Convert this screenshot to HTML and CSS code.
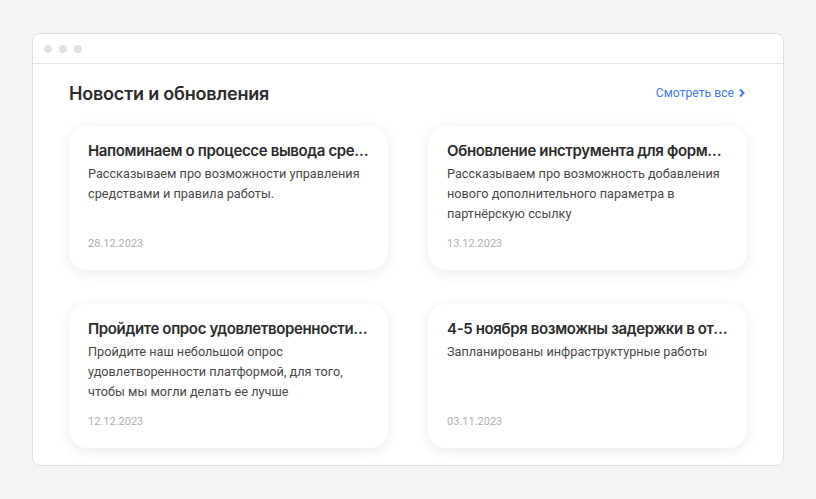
FILE: index.html
```html
<!DOCTYPE html>
<html lang="ru">

<head>
    <meta charset="UTF-8">
    <meta name="viewport" content="width=device-width, initial-scale=1.0">
    <title>Новости</title>
    <link rel="stylesheet" href="styles.css">
</head>

<body>
    <div class="window">
        <div class="window-bar">
            <span class="dot"></span>
            <span class="dot"></span>
            <span class="dot"></span>
        </div>
        <div class="window-body">
            <div class="news-head">
                <h2 class="news-title">Новости и обновления</h2>
                <a class="see-all" href="#">Смотреть все
                    <svg width="8" height="10" viewBox="0 0 8 10"><path d="M2 1.5 5.5 5 2 8.5" fill="none" stroke="currentColor" stroke-width="2" /></svg>
                </a>
            </div>
            <div class="news-grid">
                <div class="card">
                    <div class="card-title">Напоминаем о процессе вывода средств</div>
                    <div class="card-text">Рассказываем про возможности управления средствами и правила работы.</div>
                    <div class="card-date">28.12.2023</div>
                </div>
                <div class="card">
                    <div class="card-title">Обновление инструмента для формирования ссылок</div>
                    <div class="card-text">Рассказываем про возможность добавления нового дополнительного параметра в партнёрскую ссылку</div>
                    <div class="card-date">13.12.2023</div>
                </div>
                <div class="card">
                    <div class="card-title">Пройдите опрос удовлетворенности платформой</div>
                    <div class="card-text">Пройдите наш небольшой опрос удовлетворенности платформой, для того, чтобы мы могли делать ее лучше</div>
                    <div class="card-date">12.12.2023</div>
                </div>
                <div class="card">
                    <div class="card-title">4-5 ноября возможны задержки в отображении статистики</div>
                    <div class="card-text">Запланированы инфраструктурные работы</div>
                    <div class="card-date">03.11.2023</div>
                </div>
            </div>
        </div>
    </div>
</body>

</html>
```

FILE: styles.css
```css
* {
    box-sizing: border-box;
}

body {
    margin: 0;
    padding: 33px 32px;
    background-color: #f3f4f6;
    font-family: Roboto, "Noto Sans", sans-serif;
    color: #333;
}

.window {
    background-color: #fff;
    border: 1px solid #dfe0e4;
    border-radius: 8px;
    height: 433px;
    display: flex;
    flex-direction: column;
}

.window-bar {
    height: 30px;
    border-bottom: 1px solid #e3e4e8;
    display: flex;
    align-items: center;
    gap: 7px;
    padding-left: 11px;
}

.dot {
    width: 8px;
    height: 8px;
    border-radius: 50%;
    background-color: #e0e1e6;
}

.window-body {
    padding: 16px 36px 0 36px;
}

.news-head {
    display: flex;
    justify-content: space-between;
    align-items: center;
    height: 26px;
    margin-bottom: 20px;
}

.news-title {
    margin: 0;
    font-family: Inter, "Noto Sans", sans-serif;
    font-size: 18px;
    font-weight: 600;
    color: #2b2b2b;
    letter-spacing: -0.2px;
}

.see-all {
    color: #3f7be4;
    text-decoration: none;
    font-size: 12.2px;
    display: flex;
    align-items: center;
    gap: 4px;
    padding-right: 1px;
}

.news-grid {
    display: grid;
    grid-template-columns: minmax(0, 1fr) minmax(0, 1fr);
    column-gap: 40px;
    row-gap: 34px;
}

.card {
    height: 144px;
    border-radius: 18px;
    background-color: #fff;
    box-shadow: 0 3px 14px rgba(0, 0, 0, 0.09);
    padding: 14px 19px 20px 19px;
    display: flex;
    flex-direction: column;
}

.card-title {
    font-family: Inter, "Noto Sans", sans-serif;
    font-size: 15px;
    font-weight: 600;
    line-height: 22px;
    letter-spacing: -0.36px;
    color: #2b2b2b;
    white-space: nowrap;
    overflow: hidden;
    text-overflow: ellipsis;
}

.card-text {
    margin-top: 2px;
    font-size: 12.7px;
    line-height: 20px;
    color: #484848;
}

.card-date {
    margin-top: auto;
    font-size: 11px;
    color: #afafaf;
}
```
